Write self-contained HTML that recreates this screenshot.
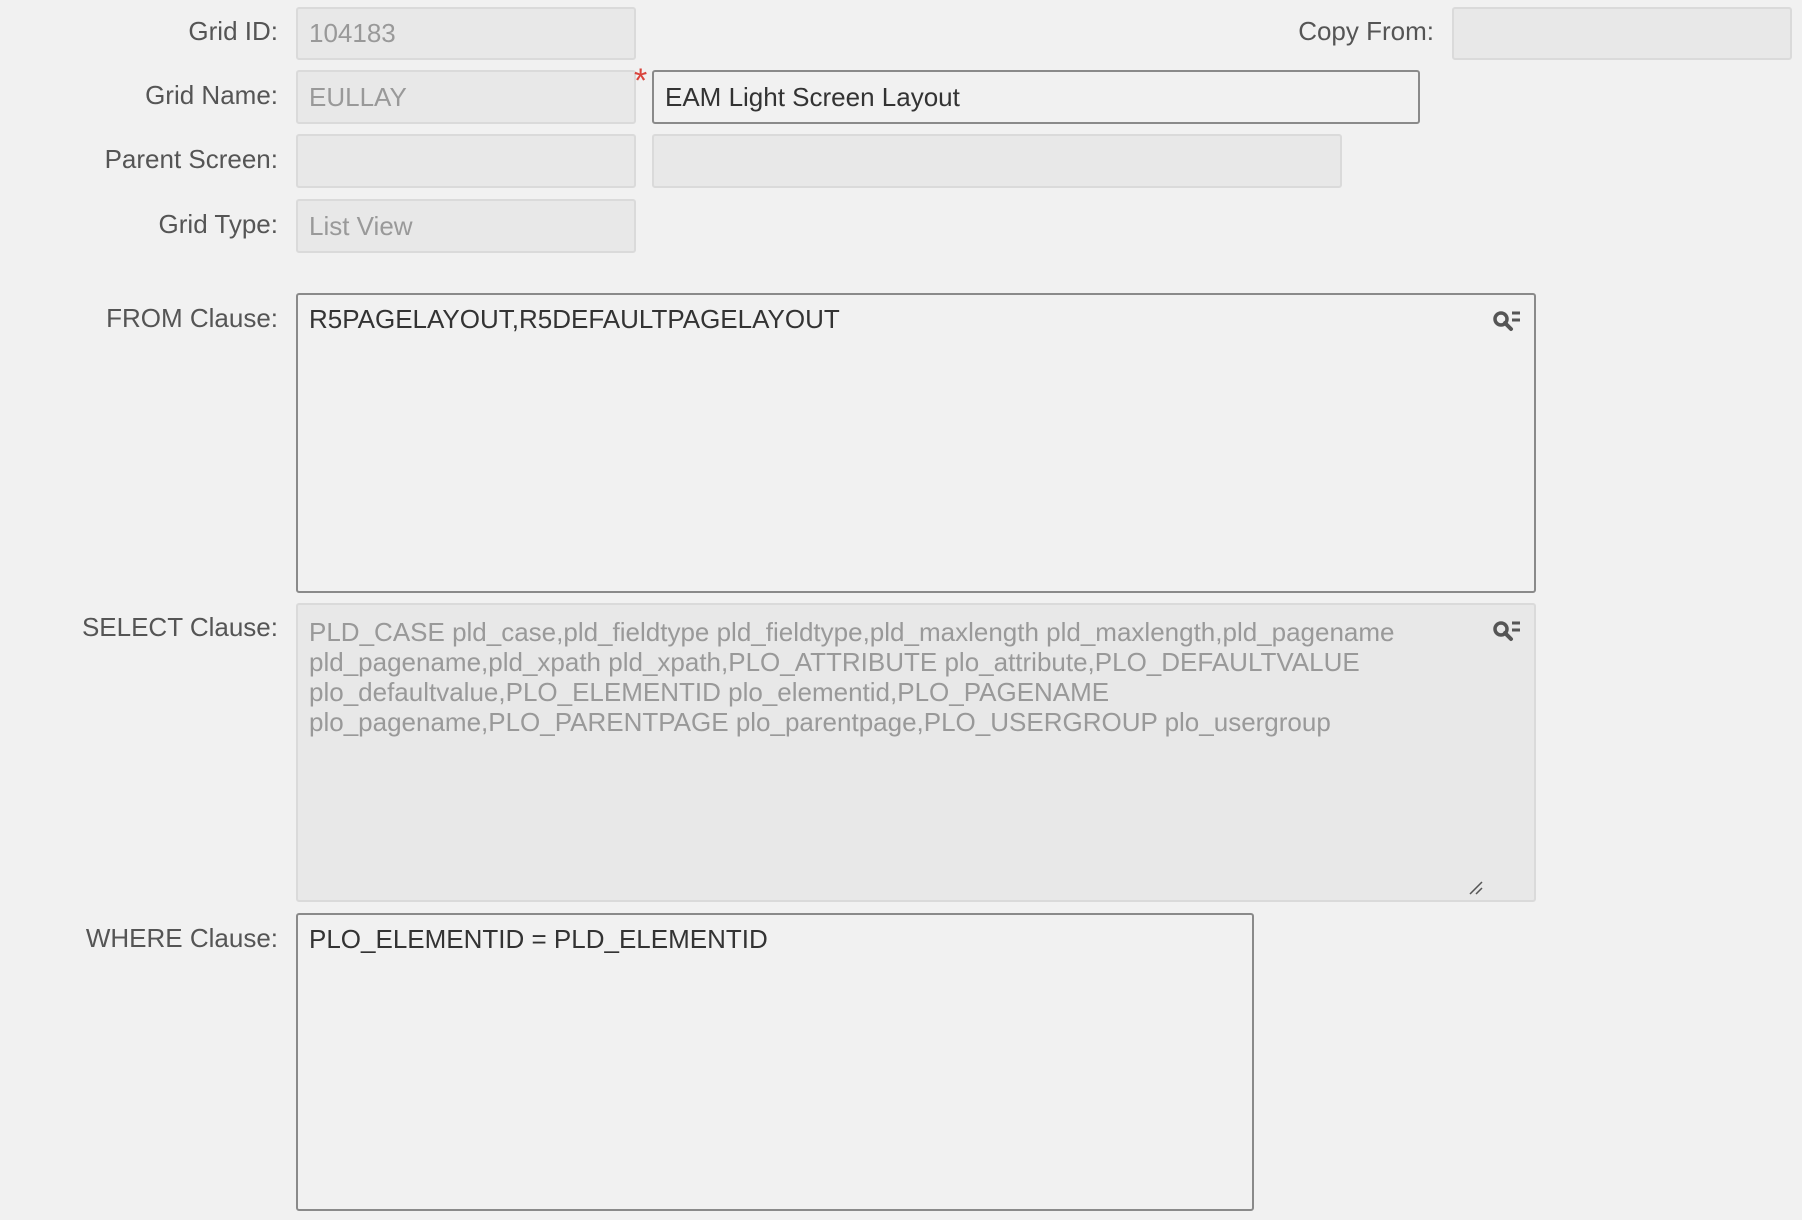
<!DOCTYPE html>
<html><head><style>
body{margin:0;width:1802px;height:1220px;background:#f1f1f1;font-family:"Liberation Sans",Arial,sans-serif;overflow:hidden;position:relative}
.l{position:absolute;right:1524px;font-size:26px;color:#555;white-space:nowrap;line-height:30px}
.b{position:absolute;box-sizing:border-box;border-radius:3px;font-size:26px;line-height:30px;padding:0 11px}
.d{background:#e8e8e8;border:2px solid #dadada;color:#999}
.e{background:#f1f1f1;border:2px solid #8a8a8a;color:#333}
.ic{position:absolute;right:12px;top:14px}
</style></head><body>
<div class="l" style="top:16px">Grid ID:</div>
<div class="b d" style="left:296px;top:7px;width:340px;height:53px;padding-top:9px">104183</div>
<div class="l" style="top:80px">Grid Name:</div>
<div class="b d" style="left:296px;top:70px;width:340px;height:54px;padding-top:10px">EULLAY</div>
<div style="position:absolute;left:634px;top:66px;color:#d9443c;font-size:34px;line-height:30px">*</div>
<div class="b e" style="left:652px;top:70px;width:768px;height:54px;padding-top:10px">EAM Light Screen Layout</div>
<div class="l" style="top:144px">Parent Screen:</div>
<div class="b d" style="left:296px;top:134px;width:340px;height:54px"></div>
<div class="b d" style="left:652px;top:134px;width:690px;height:54px"></div>
<div class="l" style="top:209px">Grid Type:</div>
<div class="b d" style="left:296px;top:199px;width:340px;height:54px;padding-top:10px">List View</div>
<div class="l" style="top:16px;right:368px">Copy From:</div>
<div class="b d" style="left:1452px;top:7px;width:340px;height:53px"></div>
<div class="l" style="top:303px">FROM Clause:</div>
<div class="b e" style="left:296px;top:293px;width:1240px;height:300px;padding-top:9px">R5PAGELAYOUT,R5DEFAULTPAGELAYOUT
<svg class="ic" width="30" height="24" viewBox="0 0 30 24"><circle cx="9" cy="10" r="6" fill="none" stroke="#555" stroke-width="3.5"/><path d="M13 14l6 6" stroke="#555" stroke-width="4" stroke-linecap="round"/><path d="M20 4h8M20 11h8" stroke="#555" stroke-width="3"/></svg></div>
<div class="l" style="top:612px">SELECT Clause:</div>
<div class="b d" style="left:296px;top:603px;width:1240px;height:299px;padding-top:12px;padding-right:60px">PLD_CASE pld_case,pld_fieldtype pld_fieldtype,pld_maxlength pld_maxlength,pld_pagename pld_pagename,pld_xpath pld_xpath,PLO_ATTRIBUTE plo_attribute,PLO_DEFAULTVALUE plo_defaultvalue,PLO_ELEMENTID plo_elementid,PLO_PAGENAME plo_pagename,PLO_PARENTPAGE plo_parentpage,PLO_USERGROUP plo_usergroup
<svg class="ic" width="30" height="24" viewBox="0 0 30 24"><circle cx="9" cy="10" r="6" fill="none" stroke="#555" stroke-width="3.5"/><path d="M13 14l6 6" stroke="#555" stroke-width="4" stroke-linecap="round"/><path d="M20 4h8M20 11h8" stroke="#555" stroke-width="3"/></svg>
<svg style="position:absolute;right:50px;bottom:4px" width="16" height="16"><path d="M2 14L14 2M8 14L14 8" stroke="#555" stroke-width="1.5"/></svg></div>
<div class="l" style="top:923px">WHERE Clause:</div>
<div class="b e" style="left:296px;top:913px;width:958px;height:298px;padding-top:9px">PLO_ELEMENTID = PLD_ELEMENTID</div>
</body></html>
